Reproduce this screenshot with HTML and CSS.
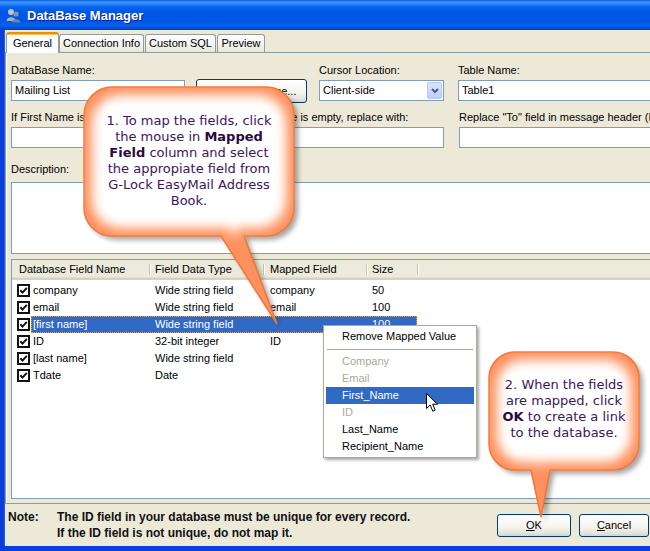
FILE: index.html
```html
<!DOCTYPE html>
<html lang="en">
<head>
  <meta charset="UTF-8">
  <meta name="viewport" content="width=device-width, initial-scale=1.0">
  <title>DataBase Manager</title>
  <link rel="stylesheet" href="styles.css">
</head>
<body>
  <svg width="0" height="0" class="defs">
    <defs>
      <symbol id="chk" viewBox="0 0 13 13">
        <rect x="1" y="1" width="11" height="11" fill="#fff" stroke="#111" stroke-width="2"/>
        <path d="M3.3 6.2 L5.5 8.6 L9.8 3.8" fill="none" stroke="#111" stroke-width="2"/>
      </symbol>
    </defs>
  </svg>

  <div class="window">
    <div class="titlebar">
      <svg class="app-icon" width="15" height="15" viewBox="0 0 15 15">
        <ellipse cx="5" cy="4" rx="3" ry="3" fill="#b8c4d6"/>
        <path d="M0.5 13 C0.5 8 9.5 8 9.5 13 Z" fill="#a3b1c6"/>
        <ellipse cx="10" cy="6" rx="2.6" ry="2.6" fill="#8294ae"/>
        <path d="M6 14.5 C6 10 14.5 10 14.5 14.5 Z" fill="#6f82a0"/>
      </svg>
      <span class="title">DataBase Manager</span>
    </div>

    <div class="frame">
      <div class="tabs">
        <div class="tab tab-general active">General</div>
        <div class="tab tab-conn">Connection Info</div>
        <div class="tab tab-sql">Custom SQL</div>
        <div class="tab tab-preview">Preview</div>
      </div>

      <div class="panel">
        <div class="row">
          <div class="field w-name">
            <label>DataBase Name:</label>
            <div class="input">Mailing List</div>
          </div>
          <div class="btn btn-select">Select Database...</div>
          <div class="field w-cursor">
            <label>Cursor Location:</label>
            <div class="input combo">Client-side
              <span class="drop">
                <svg width="8" height="6" viewBox="0 0 8 6"><path d="M1 1 L4 4 L7 1" fill="none" stroke="#4d6185" stroke-width="2"/></svg>
              </span>
            </div>
          </div>
          <div class="field w-table">
            <label>Table Name:</label>
            <div class="input">Table1</div>
          </div>
        </div>

        <div class="row row-2">
          <div class="field w-first">
            <label>If First Name is empty, replace with:</label>
            <div class="input"></div>
          </div>
          <div class="field w-last">
            <label>If Last Name is empty, replace with:</label>
            <div class="input"></div>
          </div>
          <div class="field w-to">
            <label>Replace "To" field in message header (First Name Last Name):</label>
            <div class="input"></div>
          </div>
        </div>

        <div class="desc">
          <label>Description:</label>
          <div class="textarea"></div>
        </div>

        <div class="list">
          <div class="list-head">
            <div class="hcell c1">Database Field Name</div>
            <div class="hcell c2">Field Data Type</div>
            <div class="hcell c3">Mapped Field</div>
            <div class="hcell c4">Size</div>
          </div>
          <div class="list-body">
            <div class="lrow">
              <div class="chk"><svg width="13" height="13"><use href="#chk"/></svg></div>
              <div class="cells"><span class="d1">company</span><span class="d2">Wide string field</span><span class="d3">company</span><span class="d4">50</span></div>
            </div>
            <div class="lrow">
              <div class="chk"><svg width="13" height="13"><use href="#chk"/></svg></div>
              <div class="cells"><span class="d1">email</span><span class="d2">Wide string field</span><span class="d3">email</span><span class="d4">100</span></div>
            </div>
            <div class="lrow">
              <div class="chk"><svg width="13" height="13"><use href="#chk"/></svg></div>
              <div class="cells selected"><span class="d1">[first name]</span><span class="d2">Wide string field</span><span class="d3"></span><span class="d4">100</span></div>
            </div>
            <div class="lrow">
              <div class="chk"><svg width="13" height="13"><use href="#chk"/></svg></div>
              <div class="cells"><span class="d1">ID</span><span class="d2">32-bit integer</span><span class="d3">ID</span><span class="d4"></span></div>
            </div>
            <div class="lrow">
              <div class="chk"><svg width="13" height="13"><use href="#chk"/></svg></div>
              <div class="cells"><span class="d1">[last name]</span><span class="d2">Wide string field</span><span class="d3"></span><span class="d4"></span></div>
            </div>
            <div class="lrow">
              <div class="chk"><svg width="13" height="13"><use href="#chk"/></svg></div>
              <div class="cells"><span class="d1">Tdate</span><span class="d2">Date</span><span class="d3"></span><span class="d4"></span></div>
            </div>
          </div>
        </div>
      </div>

      <div class="footer">
        <div class="note">
          <span class="note-label">Note:</span>
          <span class="note-text">The ID field in your database must be unique for every record.<br>If the ID field is not unique, do not map it.</span>
        </div>
        <div class="buttons">
          <div class="btn btn-ok"><u>O</u>K</div>
          <div class="btn btn-cancel"><u>C</u>ancel</div>
        </div>
      </div>
    </div>

    <!-- popup menu over the list -->
    <div class="menu">
      <div class="mitem">Remove Mapped Value</div>
      <div class="msep"></div>
      <div class="mitem disabled">Company</div>
      <div class="mitem disabled">Email</div>
      <div class="mitem hot">First_Name</div>
      <div class="mitem disabled">ID</div>
      <div class="mitem">Last_Name</div>
      <div class="mitem">Recipient_Name</div>
    </div>

    <svg class="cursor" width="13" height="20" viewBox="0 0 13 20">
      <path d="M0.5 0.5 L0.5 15.5 L4.2 12 L6.8 18.2 L9.2 17.2 L6.7 11.2 L11.5 11.2 Z" fill="#fff" stroke="#000" stroke-width="1"/>
    </svg>

    <!-- callouts -->
    <svg class="callouts" width="650" height="551" viewBox="0 0 650 551">
      <defs>
        <filter id="soft" x="-20%" y="-20%" width="140%" height="140%">
          <feGaussianBlur stdDeviation="2.5"/>
        </filter>
        <filter id="inner" x="-20%" y="-20%" width="140%" height="140%">
          <feMorphology operator="erode" radius="8"/>
          <feGaussianBlur stdDeviation="5.5"/>
        </filter>
      </defs>
      <g>
        <path transform="translate(4 4)" filter="url(#soft)" fill="#000" opacity="0.35"
          d="M112 87 H266 A28 28 0 0 1 294 115 V208 A28 28 0 0 1 266 236 H244 L277 324 L221 236 H112 A28 28 0 0 1 84 208 V115 A28 28 0 0 1 112 87 Z"/>
        <path fill="#ff915e" stroke="#f27634" stroke-width="1.5"
          d="M112 87 H266 A28 28 0 0 1 294 115 V208 A28 28 0 0 1 266 236 H244 L277 324 L221 236 H112 A28 28 0 0 1 84 208 V115 A28 28 0 0 1 112 87 Z"/>
        <path fill="#fff" filter="url(#inner)"
          d="M112 87 H266 A28 28 0 0 1 294 115 V208 A28 28 0 0 1 266 236 H244 L277 324 L221 236 H112 A28 28 0 0 1 84 208 V115 A28 28 0 0 1 112 87 Z"/>
      </g>
      <g>
        <path transform="translate(4 4)" filter="url(#soft)" fill="#000" opacity="0.35"
          d="M515 352 H613 A26 26 0 0 1 639 378 V444 A26 26 0 0 1 613 470 H550 L541 517 L531 470 H515 A26 26 0 0 1 489 444 V378 A26 26 0 0 1 515 352 Z"/>
        <path fill="#ff915e" stroke="#f27634" stroke-width="1.5"
          d="M515 352 H613 A26 26 0 0 1 639 378 V444 A26 26 0 0 1 613 470 H550 L541 517 L531 470 H515 A26 26 0 0 1 489 444 V378 A26 26 0 0 1 515 352 Z"/>
        <path fill="#fff" filter="url(#inner)"
          d="M515 352 H613 A26 26 0 0 1 639 378 V444 A26 26 0 0 1 613 470 H550 L541 517 L531 470 H515 A26 26 0 0 1 489 444 V378 A26 26 0 0 1 515 352 Z"/>
      </g>
    </svg>

    <div class="callout-text tip-1">1. To map the fields, click<br>the mouse in <b>Mapped</b><br><b>Field</b> column and select<br>the appropiate field from<br>G-Lock EasyMail Address<br>Book.</div>
    <div class="callout-text tip-2">2. When the fields<br>are mapped, click<br><b>OK</b> to create a link<br>to the database.</div>
  </div>
</body>
</html>
```
FILE: styles.css
```css
body {
  margin: 0;
  font-family: "Liberation Sans", Arial, sans-serif;
  font-size: 11px;
  color: #000;
  background-color: #ece9d8;
  overflow: hidden;
}
.defs {
  position: absolute;
}
.window {
  position: relative;
  width: 650px;
  height: 551px;
  overflow: hidden;
}
.titlebar {
  height: 30px;
  box-sizing: border-box;
  display: flex;
  align-items: center;
  gap: 6px;
  padding-left: 6px;
  padding-top: 1px;
  background: linear-gradient(180deg, #0a5fe0 0, #3d95ff 2px, #2c86fb 4px, #0864ee 7px, #0056e6 12px, #0056e7 21px, #0862ef 25px, #0050dc 28px, #0040bb 30px);
}
.title {
  color: #fff;
  font-size: 13px;
  font-weight: bold;
  text-shadow: 1px 1px 0 #0a1f8f;
}
.frame {
  height: 521px;
  box-sizing: border-box;
  border-left: 4px solid #0a3ddb;
  border-bottom: 5px solid #0a3ddb;
  box-shadow: inset 1px 0 0 #1a5fe8;
  background-color: #ece9d8;
}

/* tabs */
.tabs {
  height: 20px;
  padding-top: 2px;
  padding-left: 2px;
  display: flex;
  align-items: flex-end;
}
.tab {
  flex-shrink: 0;
  height: 18px;
  box-sizing: border-box;
  border: 1px solid #919b9c;
  border-bottom: none;
  border-radius: 3px 3px 0 0;
  background: linear-gradient(#ffffff, #f3f2ec 60%, #e8e6dc);
  line-height: 17px;
  text-align: center;
  margin-right: 1px;
}
.tab.active {
  height: 21px;
  margin-bottom: -1px;
  position: relative;
  border-top: 2px solid #e68b2c;
  box-shadow: inset 0 1px 0 #ffc73c;
  background: #fcfcfe;
  line-height: 19px;
  margin-right: 0;
}
.tab-general { width: 53px; }
.tab-conn { width: 85px; }
.tab-sql { width: 71px; }
.tab-preview { width: 48px; }

/* panel */
.panel {
  margin-left: 1px;
  border: 1px solid #919b9c;
  border-right: none;
  padding: 11px 0 4px 5px;
  box-shadow: inset 1px 0 0 #fff;
}
.row {
  display: flex;
  align-items: flex-start;
  height: 37px;
  white-space: nowrap;
}
.row > * {
  flex-shrink: 0;
}
.row-2 {
  margin-top: 10px;
}
.field label {
  display: block;
  height: 13px;
  line-height: 13px;
  margin-bottom: 3px;
}
.input {
  position: relative;
  height: 21px;
  box-sizing: border-box;
  border: 1px solid #7f9db9;
  background-color: #fff;
  padding: 0 3px;
  line-height: 19px;
}
.w-name { width: 174px; }
.w-cursor { width: 125px; margin-left: 12px; }
.w-table { width: 200px; margin-left: 14px; }
.w-first { width: 213px; }
.w-last { width: 209px; margin-left: 11px; }
.w-to { width: 200px; margin-left: 15px; }
.drop {
  position: absolute;
  right: 1px;
  top: 1px;
  width: 15px;
  height: 17px;
  box-sizing: border-box;
  border: 1px solid #b9cbf3;
  border-radius: 2px;
  background: linear-gradient(#d9e4fd, #bccffa);
  display: flex;
  align-items: center;
  justify-content: center;
}

.btn {
  box-sizing: border-box;
  border: 1px solid #003c74;
  border-radius: 3px;
  background: linear-gradient(#ffffff, #f4f3ee 60%, #e3e0d4 90%, #d6d0c5);
  text-align: center;
}
.btn-select {
  width: 111px;
  height: 24px;
  line-height: 22px;
  margin-left: 11px;
  margin-top: 15px;
}

.desc {
  margin-top: 15px;
}
.desc label {
  display: block;
  height: 13px;
  line-height: 13px;
  margin-bottom: 6px;
}
.textarea {
  height: 72px;
  box-sizing: border-box;
  border: 1px solid #7f9db9;
  border-right: none;
  background-color: #fff;
}

/* list view */
.list {
  margin-top: 5px;
  height: 240px;
  box-sizing: border-box;
  border: 1px solid #7f9db9;
  border-right: none;
  background-color: #fff;
}
.list-head {
  display: flex;
  height: 20px;
  box-sizing: border-box;
  background-color: #ebeadb;
  border-bottom: 2px solid #d6d2c2;
  box-shadow: inset 0 -1px 0 #e2dfcd;
}
.hcell {
  position: relative;
  line-height: 19px;
  white-space: nowrap;
  flex-shrink: 0;
  box-sizing: border-box;
}
.hcell::after {
  content: "";
  position: absolute;
  right: 0;
  top: 4px;
  width: 1px;
  height: 11px;
  background-color: #c7c5b2;
  box-shadow: 1px 0 0 #fff;
}
.c1 { width: 138px; padding-left: 7px; }
.c2 { width: 114px; padding-left: 5px; }
.c3 { width: 103px; padding-left: 6px; }
.c4 { width: 51px; padding-left: 5px; }

.list-body {
  padding-top: 2px;
}
.lrow {
  display: flex;
  height: 17px;
  line-height: 17px;
}
.chk {
  width: 19px;
  flex-shrink: 0;
  padding-left: 5px;
  box-sizing: border-box;
  display: flex;
  align-items: center;
}
.chk svg {
  display: block;
}
.cells {
  display: flex;
  white-space: nowrap;
}
.cells span {
  display: block;
  box-sizing: border-box;
  flex-shrink: 0;
  height: 17px;
}
.d1 { width: 119px; padding-left: 2px; }
.d2 { width: 114px; padding-left: 5px; }
.d3 { width: 103px; padding-left: 6px; }
.d4 { width: 50px; padding-left: 5px; }
.cells.selected {
  background-color: #316ac5;
  color: #fff;
  outline: 1px dotted #e4a24a;
  outline-offset: -1px;
}

/* footer */
.footer {
  height: 42px;
  display: flex;
  justify-content: space-between;
  padding-right: 1px;
}
.note {
  display: flex;
  padding-top: 5px;
  padding-left: 4px;
  font-size: 12px;
  font-weight: bold;
  line-height: 16px;
  color: #111;
  white-space: nowrap;
}
.note-label {
  width: 49px;
}
.buttons {
  display: flex;
  gap: 8px;
  padding-top: 10px;
}
.btn-ok,
.btn-cancel {
  height: 23px;
  line-height: 21px;
}
.btn-ok { width: 74px; }
.btn-cancel { width: 70px; }

/* popup menu */
.menu {
  position: absolute;
  left: 323px;
  top: 325px;
  width: 154px;
  box-sizing: border-box;
  border: 1px solid #aca899;
  background-color: #fff;
  padding: 2px;
  box-shadow: 2px 2px 3px rgba(0, 0, 0, 0.35);
}
.mitem {
  height: 17px;
  line-height: 17px;
  padding-left: 16px;
  white-space: nowrap;
}
.mitem.disabled {
  color: #aca899;
}
.mitem.hot {
  background-color: #316ac5;
  color: #fff;
}
.msep {
  height: 1px;
  background-color: #aca899;
  margin: 4px 1px 3px;
}

.cursor {
  position: absolute;
  left: 426px;
  top: 393px;
}

/* callouts */
.callouts {
  position: absolute;
  left: 0;
  top: 0;
  pointer-events: none;
}
.callout-text {
  position: absolute;
  font-family: "DejaVu Sans", Verdana, sans-serif;
  font-size: 13px;
  line-height: 16px;
  text-align: center;
  color: #3b1659;
  white-space: nowrap;
}
.callout-text b {
  color: #2a0a40;
}
.tip-1 {
  left: 84px;
  top: 113px;
  width: 210px;
}
.tip-2 {
  left: 489px;
  top: 377px;
  width: 150px;
}
```
